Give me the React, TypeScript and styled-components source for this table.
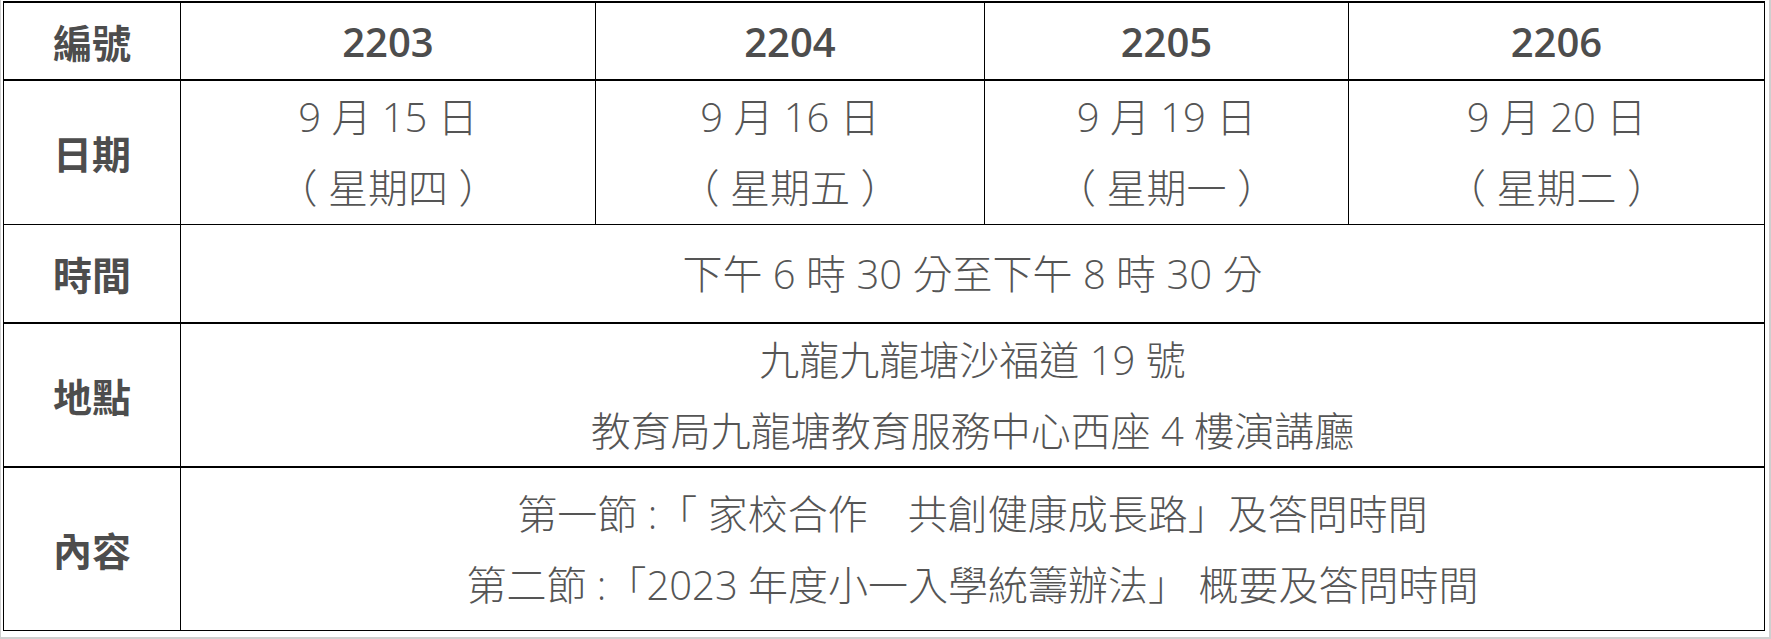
import React from 'react';
import styled, { createGlobalStyle } from 'styled-components';

const GlobalStyle = createGlobalStyle`
  html, body {
    margin: 0;
    padding: 0;
    background: #fff;
  }
  body {
    font-family: "Open Sans", "Noto Sans CJK TC", sans-serif;
    color: #555;
  }
`

const Frame = styled.div`
  width: 1771px;
  height: 639px;
  box-sizing: border-box;
  border-left: 1px solid #cfcfcf;
  border-right: 2px solid #cfcfcf;
  border-bottom: 2px solid #cfcfcf;
  padding: 1px 5px 0 2px;
`

const Table = styled.table`
  width: 1762px;
  border-collapse: collapse;
  table-layout: fixed;
  border: 1px solid #000;
  border-top: 2px solid #000;
`

const Row = styled.tr<{ $h: number; $thick?: boolean }>`
  height: ${p => p.$h}px;
  border-bottom: ${p => (p.$thick ? 2 : 1)}px solid #000;
`

const Label = styled.th`
  border-right: 1px solid #000;
  font-size: 39px;
  font-weight: 700;
  color: #4d4d4d;
  text-align: center;
  padding: 0;
`

const Head = styled.th`
  border-right: 1px solid #000;
  font-size: 40px;
  font-weight: 600;
  color: #4d4d4d;
  text-align: center;
  padding: 0;
`

const Cell = styled.td`
  border-right: 1px solid #000;
  font-size: 40px;
  font-weight: 300;
  line-height: 71px;
  color: #555;
  text-align: center;
  vertical-align: middle;
  padding: 0;
`

const Line = styled.div`
  white-space: pre;
`

const codes = ['2203', '2204', '2205', '2206']

const dates = [
  ['9 月 15 日', '（ 星期四 ）'],
  ['9 月 16 日', '（ 星期五 ）'],
  ['9 月 19 日', '（ 星期一 ）'],
  ['9 月 20 日', '（ 星期二 ）'],
]

export default function App() {
  return (
    <>
      <GlobalStyle />
      <Frame>
        <Table>
          <colgroup>
            <col style={{ width: 177 }} />
            <col style={{ width: 415 }} />
            <col style={{ width: 389 }} />
            <col style={{ width: 364 }} />
            <col style={{ width: 416 }} />
          </colgroup>
          <tbody>
            <Row $h={78} $thick>
              <Label>編號</Label>
              {codes.map(c => <Head key={c}>{c}</Head>)}
            </Row>
            <Row $h={144}>
              <Label>日期</Label>
              {dates.map((d, i) => (
                <Cell key={i}>
                  <Line>{d[0]}</Line>
                  <Line>{d[1]}</Line>
                </Cell>
              ))}
            </Row>
            <Row $h={99} $thick>
              <Label>時間</Label>
              <Cell colSpan={4}>下午 6 時 30 分至下午 8 時 30 分</Cell>
            </Row>
            <Row $h={143} $thick>
              <Label>地點</Label>
              <Cell colSpan={4}>
                <Line>九龍九龍塘沙福道 19 號</Line>
                <Line>教育局九龍塘教育服務中心西座 4 樓演講廳</Line>
              </Cell>
            </Row>
            <Row $h={163}>
              <Label>內容</Label>
              <Cell colSpan={4}>
                <Line>第一節 :「 家校合作　共創健康成長路」及答問時間</Line>
                <Line>第二節 :「2023 年度小一入學統籌辦法」 概要及答問時間</Line>
              </Cell>
            </Row>
          </tbody>
        </Table>
      </Frame>
    </>
  )
}
